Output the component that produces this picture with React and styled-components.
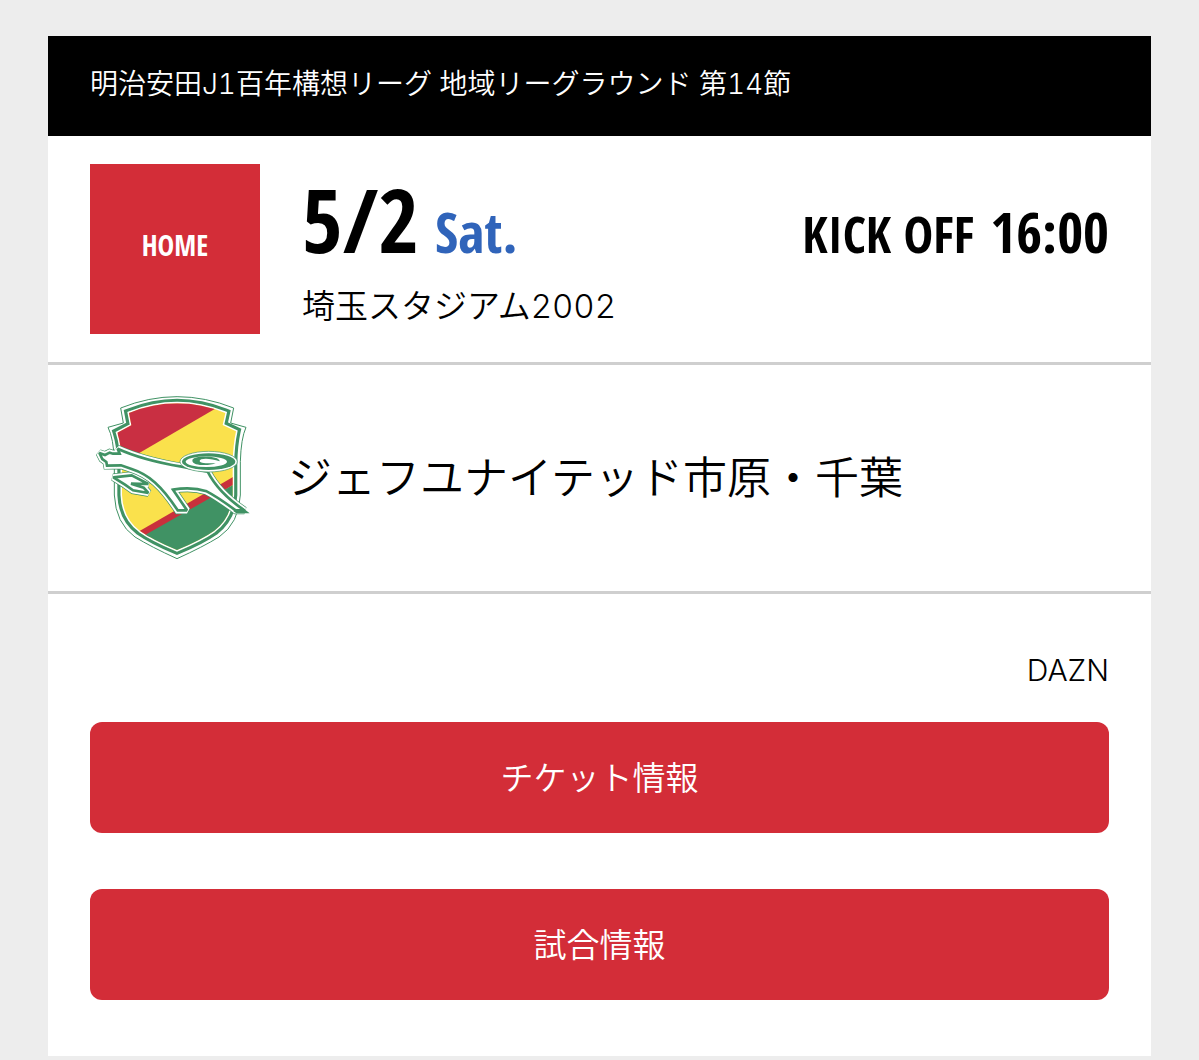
import React from "react";
import styled, { createGlobalStyle } from "styled-components";

const red = "#d32d38";
const green = "#409264";
const narrow = '"Noto Sans ExtraCondensed", "Open Sans Condensed", "Roboto Condensed", sans-serif';
const sans = 'Inter, "Noto Sans CJK JP", sans-serif';

const GlobalStyle = createGlobalStyle`
  * { box-sizing: border-box; }
  body {
    margin: 0;
    background: #ededed;
    color: #000;
    font-family: ${sans};
    font-weight: 350;
    font-variant-numeric: tabular-nums;
  }
`;

const Page = styled.main`
  padding: 36px 4% 4px;
`;

const Card = styled.article`
  background: #fff;
`;

const League = styled.header`
  padding: 28px 42px 32px;
  background: #000;
  color: #fff;
`;

const LeagueName = styled.h1`
  margin: 0;
  font-size: 28px;
  line-height: 40px;
  font-weight: 350;
`;

const Row = styled.section`
  display: flex;
  align-items: center;
  gap: ${(p) => p.$gap}px;
  padding: 28px 42px;
  border-bottom: 3px solid #cfcfcf;
`;

const Place = styled.div`
  flex: none;
  width: 170px;
  height: 170px;
  padding-bottom: 8px;
  display: flex;
  align-items: center;
  justify-content: center;
  background: ${red};
  color: #fff;
  font: 600 28px/40px ${narrow};
`;

const Info = styled.div`
  flex: 1;
`;

const When = styled.div`
  display: flex;
  justify-content: space-between;
  align-items: baseline;
  font-family: ${narrow};
  font-weight: 600;
  line-height: 56px;
  white-space: nowrap;
`;

const Day = styled.time`
  font-size: 88px;
  line-height: 108px;
`;

const Weekday = styled.span`
  margin-left: 16px;
  font-size: 56px;
  color: #3064ba;
`;

const KickOff = styled.div`
  font-size: 50px;
`;

const Time = styled.time`
  margin-left: 16px;
  font-size: 56px;
`;

const Venue = styled.p`
  margin: 4px 0 0;
  font-size: 33px;
  line-height: 54px;
`;

const Crest = styled.svg`
  flex: none;
  width: 170px;
  height: 170px;
`;

const Team = styled.h2`
  margin: 0;
  font-size: 44px;
  line-height: 64px;
  font-weight: 350;
`;

const Details = styled.section`
  display: flex;
  flex-direction: column;
  padding: 56px 42px;
`;

const Broadcast = styled.p`
  margin: 0 0 32px;
  font-size: 30px;
  line-height: 40px;
  font-weight: 300;
  text-align: right;
`;

const Actions = styled.div`
  display: grid;
  gap: 56px;
`;

const Button = styled.button`
  height: 111px;
  border: 0;
  border-radius: 12px;
  background: ${red};
  color: #fff;
  font: 350 33px/48px ${sans};
  cursor: pointer;
`;

const shield =
  "M107 69 Q276 1 446 69 L437 114 L483 127 Q468 160 466 230 L466 330 Q462 415 402 456 Q355 485 276 521 Q197 485 150 456 Q92 415 88 330 L88 230 Q86 160 69 127 L115 114 Z";
const field =
  "M132 84 Q276 26 421 84 L413 120 L453 139 Q444 180 443 235 L443 330 Q438 399 388 437 Q350 464 276 495 Q202 464 164 437 Q114 399 111 330 L111 235 Q109 180 97 143 L139 121 Z";
const body =
  "M43 204 L60 210 L74 203 L84 206 L104 206 L98 191 C150 215 220 233 290 245 L368 260 Q400 323 478 376 L452 376 Q395 334 365 319 Q320 304 264 314 L306 376 L278 376 C230 302 190 268 140 252 L108 241 L66 242 L64 231 L52 222 Z";
const foreleg =
  "M85 277 L140 271 L190 297 L138 296 L176 308 L190 324 L144 316 L120 299 Z";

function Outlined({ d }) {
  return (
    <g strokeMiterlimit="2">
      <path d={d} stroke={green} strokeWidth="23" />
      <path d={d} stroke="#fff" strokeWidth="19" />
      <path d={d} stroke={green} strokeWidth="8" fill="#fff" />
    </g>
  );
}

function TeamCrest() {
  return (
    <Crest viewBox="15 24 510 510" role="img" aria-label="ジェフユナイテッド市原・千葉">
      <defs>
        <clipPath id="field">
          <path d={field} />
        </clipPath>
      </defs>
      <path d={shield} fill="#fff" stroke={green} strokeWidth="3" />
      <path d={field} fill="none" stroke={green} strokeWidth="28" />
      <path d={field} fill="#fff" stroke="#fff" strokeWidth="9" />
      <g clipPath="url(#field)">
        <path d="M70 10 H490 V530 H70Z" fill="#fae14c" />
        <path d="M70 10 H490 L388 73 L70 258Z" fill="#c92f42" />
        <path d="M100 475 L460 267 V290 L120 500Z" fill="#c9303c" />
        <path d="M110 490 L460 291 V530 H110Z" fill={green} />
      </g>
      <Outlined d={foreleg} />
      <Outlined d={body} />
      <path d="M466 363 L494 385 H454 L444 377 H476 Z" fill={green} />
      <ellipse cx="371" cy="230" rx="86" ry="31" fill="#fff" stroke={green} strokeWidth="2" />
      <ellipse cx="371" cy="230" rx="80" ry="25" fill={green} />
      <ellipse cx="364" cy="230" rx="62" ry="16" fill="#fff" />
      <path
        d="M404 229 C404 211 322 210 322 227 C322 243 374 243 392 235 C376 235 344 236 344 228 C344 219 376 219 404 229 Z"
        fill={green}
      />
    </Crest>
  );
}

export default function App() {
  return (
    <>
      <GlobalStyle />
      <Page>
        <Card>
          <League>
            <LeagueName>明治安田J1百年構想リーグ 地域リーグラウンド 第14節</LeagueName>
          </League>
          <Row $gap={42}>
            <Place>HOME</Place>
            <Info>
              <When>
                <div>
                  <Day>5/2</Day>
                  <Weekday>Sat.</Weekday>
                </div>
                <KickOff>
                  KICK OFF<Time>16:00</Time>
                </KickOff>
              </When>
              <Venue>埼玉スタジアム2002</Venue>
            </Info>
          </Row>
          <Row $gap={28}>
            <TeamCrest />
            <Team>ジェフユナイテッド市原・千葉</Team>
          </Row>
          <Details>
            <Broadcast>DAZN</Broadcast>
            <Actions>
              <Button type="button">チケット情報</Button>
              <Button type="button">試合情報</Button>
            </Actions>
          </Details>
        </Card>
      </Page>
    </>
  );
}
